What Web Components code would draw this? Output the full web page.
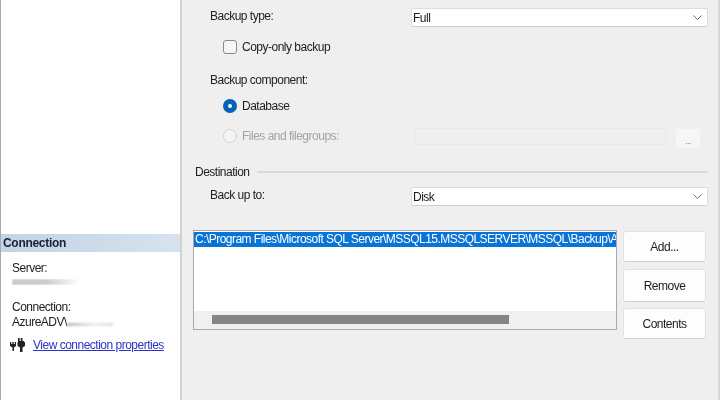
<!DOCTYPE html>
<html>
<head>
<meta charset="utf-8">
<style>
    html, body { margin: 0; height: 100%; overflow: hidden; }
    body { font: 12px "Liberation Sans", Arial, sans-serif; letter-spacing: -.5px; color: #222; background: #efefef; }
</style>
</head>
<body>
<backup-dialog></backup-dialog>
<script>
class ComboBox extends HTMLElement {
    constructor() {
        super();
        this.attachShadow({ mode: 'open' });
        this.shadowRoot.innerHTML = `
            <style>
                :host {
                    display: flex;
                    align-items: center;
                    justify-content: space-between;
                    width: 297px;
                    height: 19px;
                    box-sizing: border-box;
                    padding: 0 5px 0 1px;
                    background: #fff;
                    border: 1px solid #dcdcdc;
                    border-bottom-color: #cfcfcf;
                    border-radius: 2px;
                    color: #1c1c1c;
                }
                svg { display: block; }
            </style>
            <slot></slot>
            <svg width="9" height="5" viewBox="0 0 9 5"><path d="M.5.5 4.500 4.500 8.500.5" fill="none" stroke="#707070"/></svg>
        `;
    }
}
customElements.define('combo-box', ComboBox);

class CheckBox extends HTMLElement {
    constructor() {
        super();
        this.attachShadow({ mode: 'open' });
        this.shadowRoot.innerHTML = `
            <style>
                :host { display: flex; align-items: center; gap: 5px; }
                i { width: 12px; height: 12px; border: 1px solid #8a8a8a; border-radius: 3px; background: #f6f6f6; }
            </style>
            <i></i><slot></slot>
        `;
    }
}
customElements.define('check-box', CheckBox);

class RadioOption extends HTMLElement {
    constructor() {
        super();
        this.attachShadow({ mode: 'open' });
        this.shadowRoot.innerHTML = `
            <style>
                :host { display: flex; align-items: center; gap: 5px; }
                i { width: 12px; height: 12px; border: 1px solid #8a8a8a; border-radius: 50%; background: #f6f6f6; display: block; }
                :host([checked]) i { width: 4px; height: 4px; border: 5px solid #0563b5; background: #fff; }
                :host([disabled]) { color: #a2a2a2; }
                :host([disabled]) i { border-color: #d4d4d4; background: #f4f4f4; }
            </style>
            <i></i><slot></slot>
        `;
    }
}
customElements.define('radio-option', RadioOption);

class PushButton extends HTMLElement {
    constructor() {
        super();
        this.attachShadow({ mode: 'open' });
        this.shadowRoot.innerHTML = `
            <style>
                :host {
                    display: flex;
                    align-items: center;
                    justify-content: center;
                    box-sizing: border-box;
                    background: #fdfdfd;
                    border: 1px solid #e2e2e2;
                    border-bottom-color: #cfcfcf;
                    border-radius: 3px;
                    color: #1c1c1c;
                }
            </style>
            <slot></slot>
        `;
    }
}
customElements.define('push-button', PushButton);

class ConnectionPanel extends HTMLElement {
    constructor() {
        super();
        this.attachShadow({ mode: 'open' });
        this.shadowRoot.innerHTML = `
            <style>
                :host {
                    display: block;
                    box-sizing: border-box;
                    height: 400px;
                    padding-top: 234px;
                    background: #fff;
                    border-left: 1px solid #a9a9a9;
                    border-right: 2px solid #d2d2d2;
                    color: #222;
                }
                h2 {
                    margin: 0;
                    height: 18px;
                    padding-left: 2px;
                    font: bold 12px/18px "Liberation Sans", Arial, sans-serif;
                    letter-spacing: -.3px;
                    color: #14233a;
                    background: linear-gradient(90deg, #c3d3e3, #d6e3ef);
                }
                .info { padding: 9px 0 0 11px; line-height: 15px; }
                .info div { height: 15px; }
                .gap { margin-top: 9px; }
                .smudge { display: inline-block; vertical-align: middle; filter: blur(.8px); }
                .server {
                    width: 68px; height: 6px; margin-top: -3px;
                    background: repeating-linear-gradient(90deg, #a8a8a8 0 1px, #ececec 1px 2px);
                    -webkit-mask-image: linear-gradient(90deg, #000 50%, #0000);
                }
                .user { width: 46px; height: 3px; margin-top: 4px; background: linear-gradient(90deg, #b8b8b8, #eee 60%, #ddd); }
                .link-row { display: flex; align-items: center; gap: 7px; padding: 7px 0 0 9px; }
                a { color: #2a35c8; text-decoration: underline; }
                svg { display: block; }
            </style>
            <h2>Connection</h2>
            <div class="info">
                <div>Server:</div>
                <div><span class="smudge server"></span></div>
                <div class="gap">Connection:</div>
                <div>AzureADV\\<span class="smudge user"></span></div>
            </div>
            <div class="link-row">
                <svg width="16" height="15" viewBox="0 0 16 15" fill="#222">
                    <path d="M0 5h1.200v2h1.100V5h1.400v2h1.100V5H6v4L4 10.500V14H2.500V10.500L0 9z"/>
                    <path d="M8 1h1.700v3h1.100V1h1.700v3h1.500v1H15v4l-2.500 1.500V15H10v-4.500L7.500 9V5H8z"/>
                </svg>
                <a href="#">View connection properties</a>
            </div>
        `;
    }
}
customElements.define('connection-panel', ConnectionPanel);

class DestinationList extends HTMLElement {
    constructor() {
        super();
        this.attachShadow({ mode: 'open' });
        this.shadowRoot.innerHTML = `
            <style>
                :host {
                    display: flex;
                    flex-direction: column;
                    box-sizing: border-box;
                    width: 424px;
                    height: 100px;
                    background: #fff;
                    border: 1px solid #a8a8b0;
                    overflow: hidden;
                }
                .rows { flex: 1; min-height: 0; padding-top: 1px; }
                .row {
                    height: 15px;
                    line-height: 15px;
                    padding-left: 1px;
                    background: #0a74d6;
                    color: #fff;
                    letter-spacing: -.53px;
                    white-space: nowrap;
                    overflow: hidden;
                }
                .track { height: 18px; padding: 4px 0 0 18px; box-sizing: border-box; background: #f0f0f0; }
                .thumb { width: 297px; height: 9px; background: #858585; }
            </style>
            <div class="rows"><div class="row"><slot></slot></div></div>
            <div class="track"><div class="thumb"></div></div>
        `;
    }
}
customElements.define('destination-list', DestinationList);

class BackupForm extends HTMLElement {
    constructor() {
        super();
        this.attachShadow({ mode: 'open' });
        this.shadowRoot.innerHTML = `
            <style>
                :host {
                    display: block;
                    box-sizing: border-box;
                    height: 400px;
                    padding: 8px 0 0 11px;
                    border-right: 2px solid #d6d6d6;
                    background: #efefef;
                    color: #222;
                }
                .field { display: grid; grid-template-columns: 201px auto; align-items: center; margin-left: 17px; justify-content: start; }
                .field span { position: relative; top: -2px; }
                .indent { margin-left: 30px; }
                .title { margin-left: 17px; height: 15px; line-height: 15px; }
                .files { display: grid; grid-template-columns: 192px 251px 26px; column-gap: 0; align-items: start; height: 21px; }
                .files radio-option { height: 16px; }
                .input { height: 17px; box-sizing: border-box; border: 1px solid #e9e9e9; background: #efefef; }
                .more {
                    height: 21px; width: 26px; margin-left: 9px; background: #f6f6f6; border: 1px solid #f0f0f0; box-sizing: border-box;
                    border-radius: 2px; color: #888; font-size: 9px; line-height: 24px; text-align: center;
                }
                .dest { display: flex; align-items: center; gap: 7px; height: 15px; margin: 0 10px 0 2px; }
                .dest i { flex: 1; height: 2px; background: #d9d9d9; }
                .bottom { display: flex; margin-top: 24px; }
                .buttons { display: flex; flex-direction: column; margin: 1px 0 0 6px; }
                .buttons push-button { width: 83px; }
            </style>
            <div class="field"><span>Backup type:</span><combo-box>Full</combo-box></div>
            <check-box class="indent" style="margin-top:12px;height:16px">Copy-only backup</check-box>
            <div class="title" style="margin-top:18px">Backup component:</div>
            <radio-option class="indent" checked style="margin-top:10px;height:16px">Database</radio-option>
            <div class="files indent" style="margin-top:14px">
                <radio-option disabled>Files and filegroups:</radio-option>
                <div class="input"></div>
                <div class="more">...</div>
            </div>
            <div class="dest" style="margin-top:15px">Destination<i></i></div>
            <div class="field" style="margin-top:8px"><span>Back up to:</span><combo-box>Disk</combo-box></div>
            <div class="bottom">
                <destination-list>C:\\Program Files\\Microsoft SQL Server\\MSSQL15.MSSQLSERVER\\MSSQL\\Backup\\A</destination-list>
                <div class="buttons">
                    <push-button style="height:31px">Add...</push-button>
                    <push-button style="height:33px;margin-top:7px">Remove</push-button>
                    <push-button style="height:31px;margin-top:6px">Contents</push-button>
                </div>
            </div>
        `;
    }
}
customElements.define('backup-form', BackupForm);

class BackupDialog extends HTMLElement {
    constructor() {
        super();
        this.attachShadow({ mode: 'open' });
        this.shadowRoot.innerHTML = `
            <style>
                :host { display: grid; grid-template-columns: 182px 538px; width: 720px; height: 400px; filter: blur(.3px); }
            </style>
            <connection-panel></connection-panel>
            <backup-form></backup-form>
        `;
    }
}
customElements.define('backup-dialog', BackupDialog);
</script>
</body>
</html>
